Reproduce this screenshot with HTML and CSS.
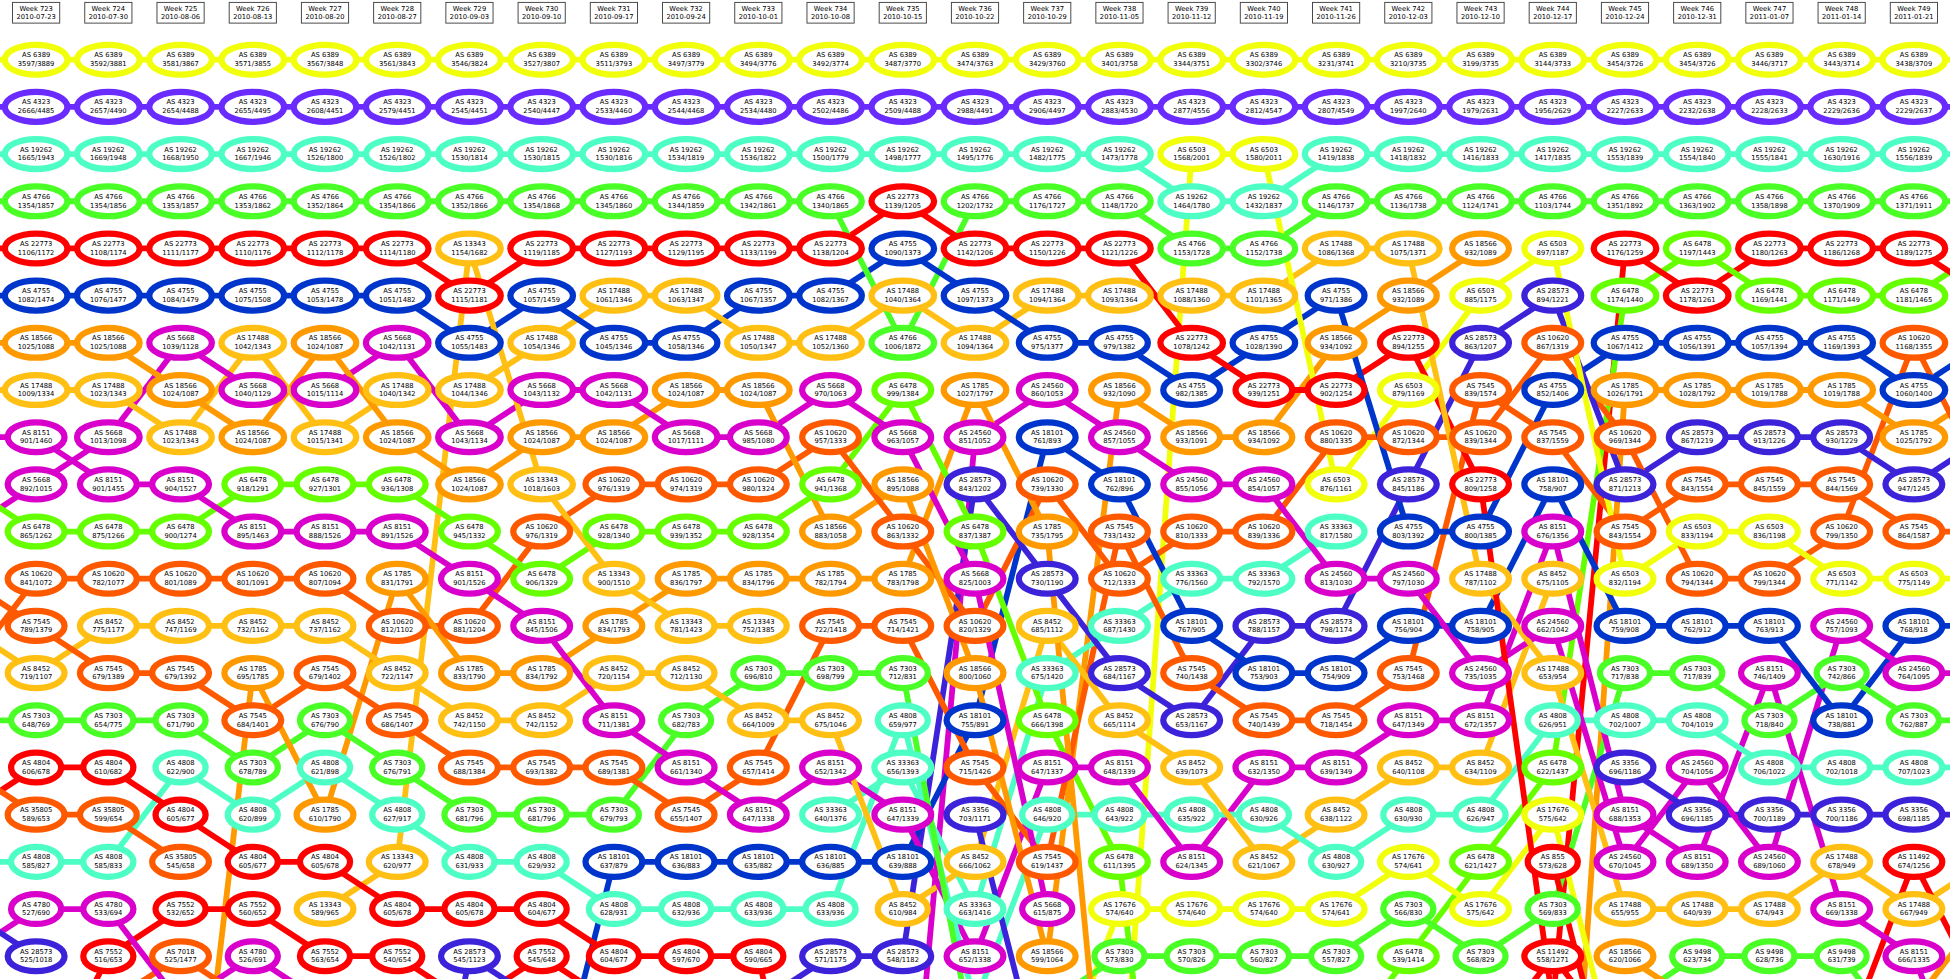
FILE: index.html
```html
<!DOCTYPE html>
<html lang="en">
<head>
<meta charset="utf-8">
<meta name="viewport" content="width=device-width, initial-scale=1">
<title>AS ranking by week</title>
<link rel="stylesheet" href="styles.css">
</head>
<body>
<main class="chart">
<svg class="chart-canvas" viewBox="0 0 4050 2033" role="img" aria-label="AS ranking by week">
<g class="weeks" id="weeks"></g>
<g class="edges" id="edges"></g>
<g class="nodes" id="nodes"></g>
</svg>
</main>
<script src="chart.js"></script>
</body>
</html>
```

FILE: styles.css
```css
body {
  margin: 0;
  background: #fff;
  font-family: "DejaVu Sans", sans-serif;
  overflow-x: hidden;
}

.chart-canvas {
  display: block;
  width: 100%;
  height: auto;
}

.chart-canvas text {
  font-size: 14px;
  text-anchor: middle;
  text-rendering: geometricPrecision;
  fill: #000;
}

.week-box {
  fill: #fff;
  stroke: #444;
  stroke-width: 2px;
}

.edges line {
  stroke: currentColor;
  stroke-width: 12px;
}

.nodes ellipse {
  fill: #fff;
  stroke: currentColor;
  stroke-width: 13px;
}

.yellow { color: #f2ff0a; }
.violet { color: #6a2bff; }
.aqua { color: #4dffc4; }
.green { color: #4aff26; }
.red { color: #ff0000; }
.blue { color: #0035cc; }
.orange { color: #ff9900; }
.gold { color: #ffbf13; }
.magenta { color: #d900cc; }
.lime { color: #66ff00; }
.indigo { color: #3c22d9; }
.vermilion { color: #ff5900; }
```

FILE: chart.js
```js
// One line per rank. A bare number switches the AS; each a/b pair fills the next week.
const RANKS = `
6389 3597/3889 3592/3881 3581/3867 3571/3855 3567/3848 3561/3843 3546/3824 3527/3807 3511/3793 3497/3779 3494/3776 3492/3774 3487/3770 3474/3763 3429/3760 3401/3758 3344/3751 3302/3746 3231/3741 3210/3735 3199/3735 3144/3733 3454/3726 3454/3726 3446/3717 3443/3714 3438/3709
4323 2666/4485 2657/4490 2654/4488 2655/4495 2608/4451 2579/4451 2545/4451 2540/4447 2533/4460 2544/4468 2534/4480 2502/4486 2509/4488 2988/4491 2906/4497 2883/4530 2877/4556 2812/4547 2807/4549 1997/2640 1979/2631 1956/2629 2227/2633 2232/2638 2228/2633 2229/2636 2229/2637
19262 1665/1943 1669/1948 1668/1950 1667/1946 1526/1800 1526/1802 1530/1814 1530/1815 1530/1816 1534/1819 1536/1822 1500/1779 1498/1777 1495/1776 1482/1775 1473/1778 6503 1568/2001 1580/2011 19262 1419/1838 1418/1832 1416/1833 1417/1835 1553/1839 1554/1840 1555/1841 1630/1916 1556/1839
4766 1354/1857 1354/1856 1353/1857 1353/1862 1352/1864 1354/1866 1352/1866 1354/1868 1345/1860 1344/1859 1342/1861 1340/1865 22773 1139/1205 4766 1202/1732 1176/1727 1148/1720 19262 1464/1780 1432/1837 4766 1146/1737 1136/1738 1124/1741 1103/1744 1351/1892 1363/1902 1358/1898 1370/1909 1371/1911
22773 1106/1172 1108/1174 1111/1177 1110/1176 1112/1178 1114/1180 13343 1154/1682 22773 1119/1185 1127/1193 1129/1195 1133/1199 1138/1204 4755 1090/1373 22773 1142/1206 1150/1226 1121/1226 4766 1153/1728 1152/1738 17488 1086/1368 1075/1371 18566 932/1089 6503 897/1187 22773 1176/1259 6478 1197/1443 22773 1180/1263 1186/1268 1189/1275
4755 1082/1474 1076/1477 1084/1479 1075/1508 1053/1478 1051/1482 22773 1115/1181 4755 1057/1459 17488 1061/1346 1063/1347 4755 1067/1357 1082/1367 17488 1040/1364 4755 1097/1373 17488 1094/1364 1093/1364 1088/1360 1101/1365 4755 971/1386 18566 932/1089 6503 885/1175 28573 894/1221 6478 1174/1440 22773 1178/1261 6478 1169/1441 1171/1449 1181/1465
18566 1025/1088 1025/1088 5668 1039/1128 17488 1042/1343 18566 1024/1087 5668 1042/1131 4755 1055/1483 17488 1054/1346 4755 1045/1346 1058/1346 17488 1050/1347 1052/1360 4766 1006/1872 17488 1094/1364 4755 975/1377 979/1382 22773 1078/1242 4755 1028/1390 18566 934/1092 22773 894/1255 28573 863/1207 10620 867/1319 4755 1067/1412 1056/1391 1057/1394 1169/1393 10620 1168/1355
17488 1009/1334 1023/1343 18566 1024/1087 5668 1040/1129 1015/1114 17488 1040/1342 1044/1346 5668 1043/1132 1042/1131 18566 1024/1087 1024/1087 5668 970/1063 6478 999/1384 1785 1027/1797 24560 860/1053 18566 932/1090 4755 982/1385 22773 939/1251 902/1254 6503 879/1169 7545 839/1574 4755 852/1406 1785 1026/1791 1028/1792 1019/1788 1019/1788 4755 1060/1400
8151 901/1460 5668 1013/1098 17488 1023/1343 18566 1024/1087 17488 1015/1341 18566 1024/1087 5668 1043/1134 18566 1024/1087 1024/1087 5668 1017/1111 985/1080 10620 957/1333 5668 963/1057 24560 851/1052 18101 761/893 24560 857/1055 18566 933/1091 934/1092 10620 880/1335 872/1344 839/1344 7545 837/1559 10620 969/1344 28573 867/1219 913/1226 930/1229 1785 1025/1792
5668 892/1015 8151 901/1455 904/1527 6478 918/1291 927/1301 936/1308 18566 1024/1087 13343 1018/1603 10620 976/1319 974/1319 980/1324 6478 941/1368 18566 895/1088 28573 843/1202 10620 739/1330 18101 762/896 24560 855/1056 854/1057 6503 876/1161 28573 845/1186 22773 809/1258 18101 758/907 28573 871/1213 7545 843/1554 845/1559 844/1569 28573 947/1245
6478 865/1262 875/1266 900/1274 8151 895/1463 888/1526 891/1526 6478 945/1332 10620 976/1319 6478 928/1340 939/1352 928/1354 18566 883/1058 10620 863/1332 6478 837/1387 1785 735/1795 7545 733/1432 10620 810/1333 839/1336 33363 817/1580 4755 803/1392 800/1385 8151 676/1356 7545 843/1554 6503 833/1194 836/1198 10620 799/1350 7545 864/1587
10620 841/1072 782/1077 801/1089 801/1091 807/1094 1785 831/1791 8151 901/1526 6478 906/1329 13343 900/1510 1785 836/1797 834/1796 782/1794 783/1798 5668 825/1003 28573 730/1190 10620 712/1333 33363 776/1560 792/1570 24560 813/1030 797/1030 17488 787/1102 8452 675/1105 6503 832/1194 10620 794/1344 799/1344 6503 771/1142 775/1149
7545 789/1379 8452 775/1177 747/1169 732/1162 737/1162 10620 812/1102 881/1204 8151 845/1506 1785 834/1793 13343 781/1423 752/1385 7545 722/1418 714/1421 10620 820/1329 8452 685/1112 33363 687/1430 18101 767/905 28573 788/1157 798/1174 18101 756/904 758/905 24560 662/1042 18101 759/908 762/912 763/913 24560 757/1093 18101 768/918
8452 719/1107 7545 679/1389 679/1392 1785 695/1785 7545 679/1402 8452 722/1147 1785 833/1790 834/1792 8452 720/1154 712/1130 7303 696/810 698/799 712/831 18566 800/1060 33363 675/1420 28573 684/1167 7545 740/1438 18101 753/903 754/909 7545 753/1468 24560 735/1035 17488 653/954 7303 717/838 717/839 8151 746/1409 7303 742/866 24560 764/1095
7303 648/769 654/775 671/790 7545 684/1401 7303 676/790 7545 686/1407 8452 742/1150 742/1152 8151 711/1381 7303 682/783 8452 664/1009 675/1046 4808 659/977 18101 755/891 6478 666/1398 8452 665/1114 28573 653/1167 7545 740/1439 718/1454 8151 647/1349 672/1357 4808 626/951 702/1007 704/1019 7303 718/840 18101 738/881 7303 762/887
4804 606/678 610/682 4808 622/900 7303 678/789 4808 621/898 7303 676/791 7545 688/1384 693/1382 689/1381 8151 661/1340 7545 657/1414 8151 652/1342 33363 656/1393 7545 715/1426 8151 647/1337 648/1339 8452 639/1073 8151 632/1350 639/1349 8452 640/1108 634/1109 6478 622/1437 3356 696/1186 24560 704/1056 4808 706/1022 702/1018 707/1023
35805 589/653 599/654 4804 605/677 4808 620/899 1785 610/1790 4808 627/917 7303 681/796 681/796 679/793 7545 655/1407 8151 647/1338 33363 640/1376 8151 647/1339 3356 703/1171 4808 646/920 643/922 635/922 630/926 8452 638/1122 4808 630/930 626/947 17676 575/642 8151 688/1353 3356 696/1185 700/1189 700/1186 698/1185
4808 585/827 585/833 35805 545/658 4804 605/677 605/678 13343 620/977 4808 631/933 629/932 18101 637/879 636/883 635/882 636/885 639/888 8452 666/1062 7545 619/1437 6478 611/1395 8151 624/1345 8452 621/1067 4808 630/927 17676 574/641 6478 621/1427 855 573/628 24560 670/1045 8151 689/1350 24560 689/1060 17488 678/949 11492 674/1256
4780 527/690 533/694 7552 532/652 560/652 13343 589/965 4804 605/678 605/678 604/677 4808 628/931 632/936 633/936 633/936 8452 610/984 33363 663/1416 5668 615/875 17676 574/640 574/640 574/640 574/641 7303 566/830 17676 575/642 7303 569/833 17488 655/955 640/939 674/943 8151 669/1338 17488 667/949
28573 525/1018 7552 516/653 7018 525/1477 4780 526/691 7552 563/654 540/654 28573 545/1123 7552 545/648 4804 604/677 597/670 590/665 28573 571/1175 548/1182 8151 652/1338 18566 599/1064 7303 573/830 570/826 560/827 557/827 6478 539/1414 7303 568/829 11492 558/1271 18566 620/1066 9498 623/734 628/736 631/739 8151 666/1335
`.trim().split("\n");

// AS, week column and rank of points that lie outside the visible window.
const OUTSIDE = [
  [6389, -1, 1], [4323, -1, 2], [19262, -1, 3], [4766, -1, 4], [22773, -1, 5],
  [4755, -1, 6], [18566, -1, 7], [17488, -1, 8], [8151, -1, 9], [5668, -1, 11],
  [6478, -1, 10], [10620, -1, 14], [7545, -1, 12], [8452, -1, 13], [7303, -1, 15],
  [4804, -1, 17], [35805, -1, 16], [4808, -1, 18], [4780, -1, 20], [28573, -1, 19],
  [6389, 27, 1], [4323, 27, 2], [19262, 27, 3], [4766, 27, 4], [22773, 27, 6],
  [6478, 27, 5], [10620, 27, 10], [4755, 27, 7], [1785, 27, 8], [28573, 27, 9],
  [7545, 27, 11], [6503, 27, 12], [18101, 27, 13], [24560, 27, 14], [7303, 27, 15],
  [4808, 27, 16], [3356, 27, 17], [11492, 27, 21], [17488, 27, 18], [8151, 27, 24],
  [18566, 26, 21], [18566, 27, 19],
  [7552, 0, 23], [7018, 1, 21], [4780, 2, 21], [1785, 2, 27], [7018, 3, 21],
  [4780, 4, 21], [28573, 5, 28], [7552, 6, 21], [28573, 7, 21], [18101, 7, 24],
  [7552, 8, 21], [28573, 10, 21], [4804, 11, 27], [24560, 12, 26], [4808, 13, 21],
  [7303, 13, 22], [3356, 14, 23], [7303, 14, 21], [17676, 14, 23], [1785, 15, 27],
  [6503, 15, 24], [6478, 16, 31], [6478, 18, 22], [11492, 20, 22], [22773, 21, 21],
  [1785, 21, 30], [855, 22, 24], [17676, 22, 23], [11492, 22, 22], [9498, 22, 21],
  [18566, 23, 21], [11492, 25, 22], [9498, 26, 22]
];

const COLORS = {
  yellow: [6389, 6503, 17676],
  violet: [4323],
  aqua: [19262, 4808, 33363],
  green: [4766, 7303, 9498],
  red: [22773, 4804, 7552, 11492, 855],
  blue: [4755, 18101],
  orange: [18566, 1785],
  gold: [17488, 13343, 8452],
  magenta: [5668, 8151, 24560, 4780],
  lime: [6478],
  indigo: [28573, 3356],
  vermilion: [10620, 7545, 35805, 7018]
};

const WEEKS = 27;
const FIRST_WEEK = 723;
const FIRST_DATE = Date.UTC(2010, 6, 23);
const DAY = 86400000;

const x = (column) => 75 + column * 150;
const y = (rank) => 26 + rank * 98;

const colorOf = {};
for (const [name, list] of Object.entries(COLORS)) {
  for (const as of list) colorOf[as] = name;
}

const nodes = [];
RANKS.forEach((line, index) => {
  let as = 0;
  let column = 0;
  for (const token of line.split(" ")) {
    if (token.includes("/")) {
      nodes.push({ as, column, rank: index + 1, label: token });
      column += 1;
    } else {
      as = Number(token);
    }
  }
});

const points = nodes.map((n) => [n.as, n.column, n.rank]).concat(OUTSIDE);
const rankOf = new Map(points.map(([as, column, rank]) => [as + ":" + column, rank]));

function radius(node) {
  if (node.label.length === 9) return 65;
  return node.label.length === 8 || node.as > 9999 ? 59 : 52;
}

let weeks = "";
for (let i = 0; i < WEEKS; i += 1) {
  const date = new Date(FIRST_DATE + i * 7 * DAY).toISOString().slice(0, 10);
  weeks += `<rect class="week-box" x="${x(i) - 49}" y="5" width="98" height="43"/>` +
    `<text x="${x(i)}" y="22">Week ${FIRST_WEEK + i}</text>` +
    `<text x="${x(i)}" y="40">${date}</text>`;
}

// Week by week, the better-ranked AS is painted last so that it stays on top.
let edges = "";
points.sort((a, b) => a[1] - b[1] || b[2] - a[2]);
for (const [as, column, rank] of points) {
  const next = rankOf.get(as + ":" + (column + 1));
  if (next === undefined) continue;
  edges += `<line class="${colorOf[as]}" x1="${x(column)}" y1="${y(rank)}" x2="${x(column + 1)}" y2="${y(next)}"/>`;
}

let ovals = "";
for (const n of nodes) {
  const cx = x(n.column);
  const cy = y(n.rank);
  ovals += `<ellipse class="${colorOf[n.as]}" cx="${cx}" cy="${cy}" rx="${radius(n)}" ry="31"/>` +
    `<text x="${cx}" y="${cy - 5}">AS ${n.as}</text>` +
    `<text x="${cx}" y="${cy + 13}">${n.label}</text>`;
}

document.getElementById("weeks").innerHTML = weeks;
document.getElementById("edges").innerHTML = edges;
document.getElementById("nodes").innerHTML = ovals;
```
